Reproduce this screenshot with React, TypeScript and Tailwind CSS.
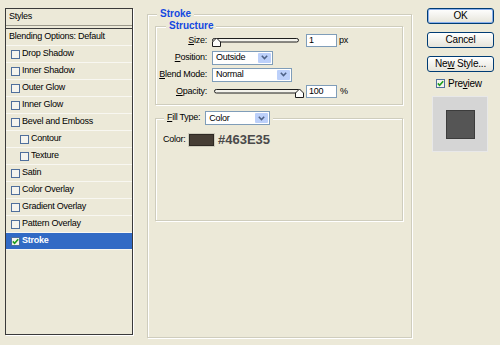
import type { ReactNode } from 'react'

// Photoshop "Layer Style" dialog, Stroke page (Windows XP look)

const styleItems: { label: string; indent?: boolean; checked?: boolean }[] = [
  { label: 'Drop Shadow' },
  { label: 'Inner Shadow' },
  { label: 'Outer Glow' },
  { label: 'Inner Glow' },
  { label: 'Bevel and Emboss' },
  { label: 'Contour', indent: true },
  { label: 'Texture', indent: true },
  { label: 'Satin' },
  { label: 'Color Overlay' },
  { label: 'Gradient Overlay' },
  { label: 'Pattern Overlay' },
  { label: 'Stroke', checked: true },
]

function Checkbox({ checked }: { checked?: boolean }) {
  return (
    <span className="flex h-[9px] w-[9px] shrink-0 items-center justify-center border border-[#4f6f9c] bg-[#f5f4ee]">
      {checked && (
        <svg width="7" height="7" viewBox="0 0 7 7">
          <path d="M0.8 3.4 L2.6 5.3 L6.2 1.2" fill="none" stroke="#1f9e1f" strokeWidth="1.6" />
        </svg>
      )}
    </span>
  )
}

function Mn({ children }: { children: ReactNode }) {
  return <span className="underline underline-offset-1">{children}</span>
}

function Select({ value, width }: { value: string; width: string }) {
  return (
    <div className={`flex h-[14px] items-center border border-[#7f9db9] bg-white ${width}`}>
      <span className="flex-1 pl-[3px] leading-none">{value}</span>
      <span className="mr-[1px] flex h-[10px] w-[13px] items-center justify-center rounded-[1px] bg-[#bcd0fa]">
        <svg width="7" height="5" viewBox="0 0 7 5">
          <path d="M0.8 0.8 L3.5 3.6 L6.2 0.8" fill="none" stroke="#4d6185" strokeWidth="1.5" />
        </svg>
      </span>
    </div>
  )
}

function NumberBox({ value }: { value: string }) {
  return (
    <div className="flex h-[13px] w-[31px] items-center border border-[#7f9db9] bg-white pl-[2px] leading-none">
      {value}
    </div>
  )
}

function Slider({ at }: { at: 'start' | 'end' }) {
  const x = at === 'start' ? 0 : 83
  return (
    <svg width="92" height="13" viewBox="0 0 92 13" className="shrink-0">
      <rect x={at === 'start' ? 0.5 : 2.5} y="4.5" width="86" height="3.5" rx="1.8" fill="#f4f3ec" stroke="#1e1e1e" />
      <path
        d={`M${x + 0.5} 12.5 L${x + 0.5} 8 L${x + 4.5} 4 L${x + 8.5} 8 L${x + 8.5} 12.5 Z`}
        fill="#fdfdfb"
        stroke="#1e1e1e"
      />
    </svg>
  )
}

function Button({ children, primary }: { children: ReactNode; primary?: boolean }) {
  return (
    <div
      className={`flex h-[16px] w-[67px] items-center justify-center rounded-[3px] border border-[#003c74] bg-linear-to-b from-white to-[#e6e4da] text-[10px] leading-none tracking-[-0.2px] ${
        primary ? 'shadow-[inset_0_0_0_1px_#8ab0ee]' : ''
      }`}
    >
      {children}
    </div>
  )
}

export default function App() {
  return (
    <div className="flex h-[345px] w-[500px] items-start bg-[#ece9d8] pl-[5px] pt-[8px] font-['Liberation_Sans',Arial,sans-serif] text-[9px] tracking-[-0.25px] text-black">
      {/* Styles list */}
      <div className="flex h-[327px] w-[128px] shrink-0 flex-col border border-[#3a3a3a] shadow-[1px_1px_0_#ffffff]">
        <div className="flex h-[17px] items-center border-b border-[#9a988b] pl-[3px]">Styles</div>
        <div className="mt-[2px] flex h-[18px] items-center border-y border-t-[#3a3a3a] border-b-[#f8f7f1] pl-[3px]">
          Blending Options: Default
        </div>
        {styleItems.map((item) => (
          <div
            key={item.label}
            className={`flex h-[17px] items-center gap-[2px] border-b border-[#f8f7f1] ${
              item.indent ? 'pl-[14px]' : 'pl-[5px]'
            } ${item.checked ? 'bg-[#316ac5] font-bold text-white' : ''}`}
          >
            <Checkbox checked={item.checked} />
            <span>{item.label}</span>
          </div>
        ))}
      </div>

      {/* Stroke group */}
      <fieldset className="ml-[14px] h-[330px] w-[265px] shrink-0 border border-[#cfcdbd] shadow-[inset_1px_1px_0_#ffffff,1px_1px_0_#ffffff]">
        <legend className="ml-[9px] bg-[#ece9d8] px-[3px] text-[10px] font-bold leading-[12px] tracking-normal text-[#1448e0]">
          Stroke
        </legend>

        <fieldset className="ml-[7px] h-[85px] w-[248px] border border-[#cfcdbd] shadow-[inset_1px_1px_0_#ffffff,1px_1px_0_#ffffff]">
          <legend className="ml-[10px] bg-[#ece9d8] px-[3px] text-[10px] font-bold leading-[12px] tracking-normal text-[#1448e0]">
            Structure
          </legend>
          <div className="flex flex-col">
            <div className="flex h-[17px] items-center">
              <span className="w-[51px] text-right">
                <Mn>S</Mn>ize:
              </span>
              <span className="ml-[5px] flex items-center">
                <Slider at="start" />
              </span>
              <span className="ml-[2px]">
                <NumberBox value="1" />
              </span>
              <span className="ml-[2px]">px</span>
            </div>
            <div className="flex h-[17px] items-center">
              <span className="w-[51px] text-right">
                <Mn>P</Mn>osition:
              </span>
              <span className="ml-[5px]">
                <Select value="Outside" width="w-[61px]" />
              </span>
            </div>
            <div className="flex h-[17px] items-center">
              <span className="w-[51px] text-right">
                <Mn>B</Mn>lend Mode:
              </span>
              <span className="ml-[5px]">
                <Select value="Normal" width="w-[80px]" />
              </span>
            </div>
            <div className="flex h-[17px] items-center">
              <span className="w-[51px] text-right">
                <Mn>O</Mn>pacity:
              </span>
              <span className="ml-[5px] flex items-center">
                <Slider at="end" />
              </span>
              <span className="ml-[2px]">
                <NumberBox value="100" />
              </span>
              <span className="ml-[3px]">%</span>
            </div>
          </div>
        </fieldset>

        <fieldset className="ml-[7px] mt-[6px] h-[110px] w-[248px] border border-[#cfcdbd] shadow-[inset_1px_1px_0_#ffffff,1px_1px_0_#ffffff]">
          <legend className="ml-[8px] flex items-center bg-[#ece9d8] px-[3px]">
            <span>
              <Mn>F</Mn>ill Type:
            </span>
            <span className="ml-[5px]">
              <Select value="Color" width="w-[65px]" />
            </span>
          </legend>
          <div className="mt-[8px] flex h-[14px] items-center pl-[7px]">
            <span className="w-[25px]">Color:</span>
            <span className="h-[14px] w-[27px] border border-[#cfcdbd] bg-[#463e35] shadow-[inset_0_0_0_1px_#2e2923]" />
            <span className="ml-[3px] text-[13px] font-bold tracking-normal text-[#4a4a4a]">#463E35</span>
          </div>
        </fieldset>
      </fieldset>

      {/* Buttons and preview */}
      <div className="ml-[15px] flex w-[67px] shrink-0 flex-col">
        <Button primary>OK</Button>
        <div className="mt-[8px]">
          <Button>Cancel</Button>
        </div>
        <div className="mt-[8px]">
          <Button>
            Ne<Mn>w</Mn>&nbsp;Style...
          </Button>
        </div>
        <div className="ml-[9px] mt-[6px] flex h-[10px] items-center gap-[3px] text-[10px]">
          <Checkbox checked />
          <span>
            Pre<Mn>v</Mn>iew
          </span>
        </div>
        <div className="ml-[5px] mt-[8px] flex h-[56px] w-[56px] items-center justify-center border border-[#e8e8e8] bg-[#d5d5d5]">
          <div className="h-[29px] w-[29px] border border-[#3c3c3c] bg-[#555555]" />
        </div>
      </div>
    </div>
  )
}
